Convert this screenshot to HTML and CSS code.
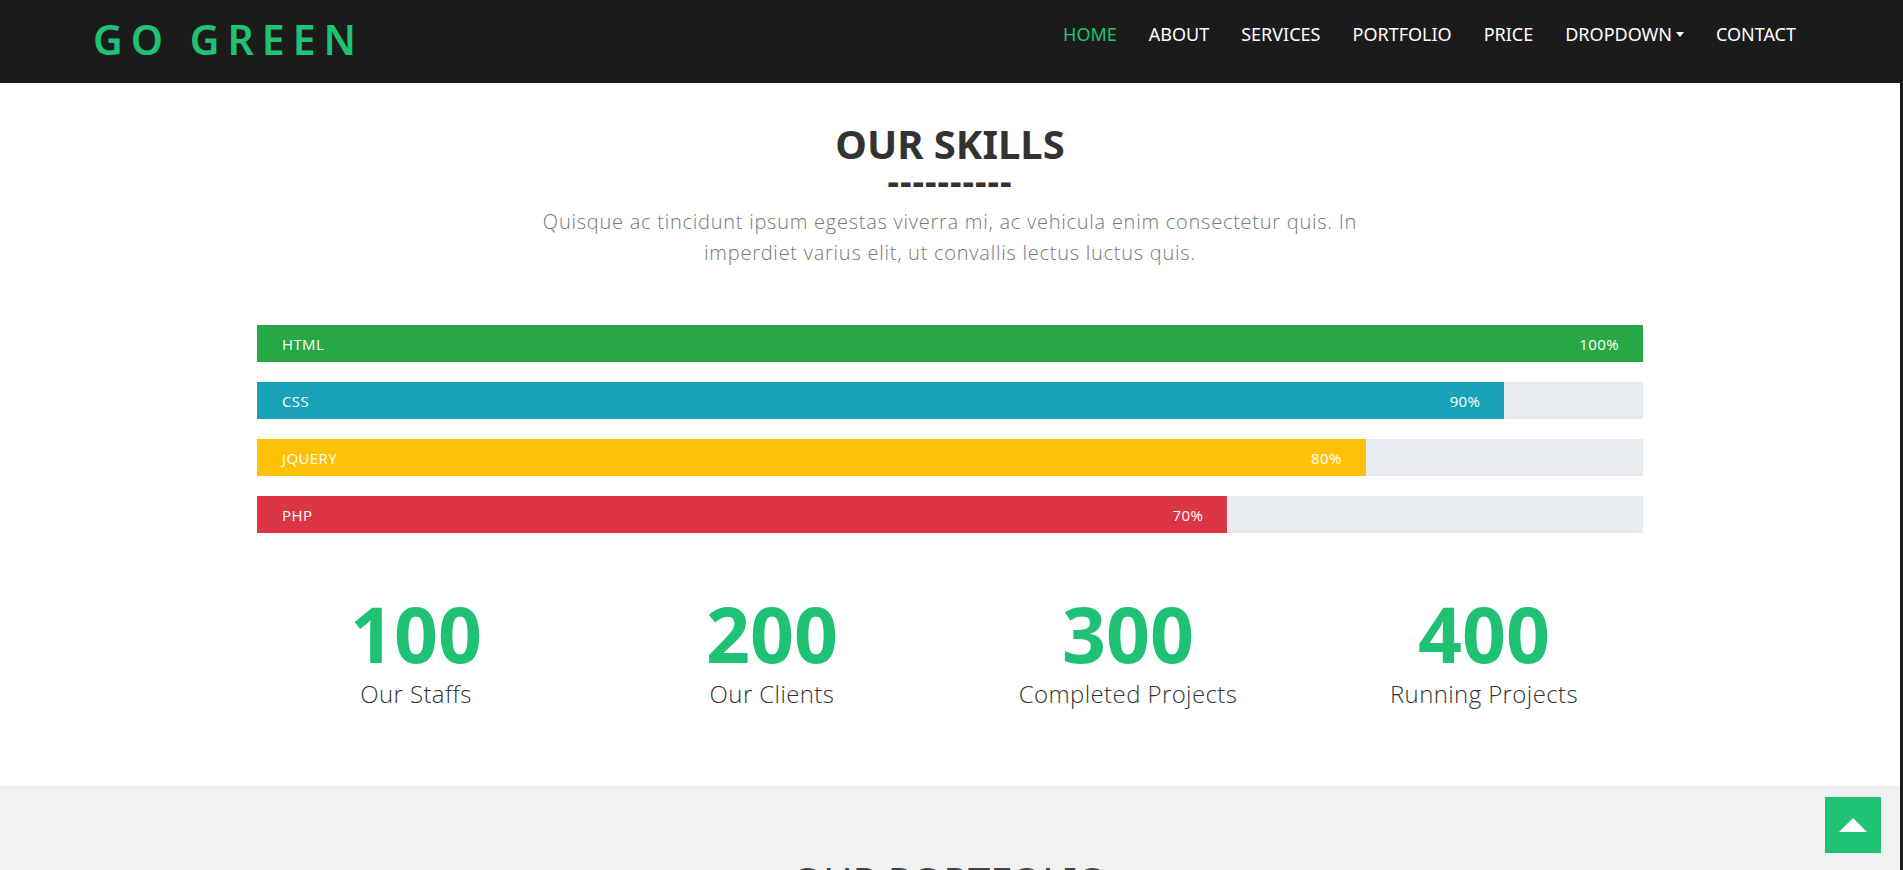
FILE: index.html
```html
<!DOCTYPE html>
<html lang="en">
<head>
<meta charset="utf-8">
<title>Go Green</title>
<link rel="stylesheet" href="styles.css">
</head>
<body>
<header class="navbar">
  <a class="brand" href="#">GO GREEN</a>
  <nav class="nav">
    <a class="nav-link active" href="#">HOME</a>
    <a class="nav-link" href="#">ABOUT</a>
    <a class="nav-link" href="#">SERVICES</a>
    <a class="nav-link" href="#">PORTFOLIO</a>
    <a class="nav-link" href="#">PRICE</a>
    <a class="nav-link dropdown" href="#">DROPDOWN<span class="caret"></span></a>
    <a class="nav-link" href="#">CONTACT</a>
  </nav>
</header>

<section class="skills">
  <h2 class="section-title">OUR SKILLS</h2>
  <div class="dashes">----------</div>
  <p class="lead">Quisque ac tincidunt ipsum egestas viverra mi, ac vehicula enim consectetur quis. In imperdiet varius elit, ut convallis lectus luctus quis.</p>

  <div class="bars">
    <div class="progress"><div class="bar bar-green" style="width:100%"><span>HTML</span><span>100%</span></div></div>
    <div class="progress"><div class="bar bar-teal" style="width:90%"><span>CSS</span><span>90%</span></div></div>
    <div class="progress"><div class="bar bar-yellow" style="width:80%"><span>JQUERY</span><span>80%</span></div></div>
    <div class="progress"><div class="bar bar-red" style="width:70%"><span>PHP</span><span>70%</span></div></div>
  </div>

  <div class="counters">
    <div class="counter"><div class="num">100</div><div class="label">Our Staffs</div></div>
    <div class="counter"><div class="num">200</div><div class="label">Our Clients</div></div>
    <div class="counter"><div class="num">300</div><div class="label">Completed Projects</div></div>
    <div class="counter"><div class="num">400</div><div class="label">Running Projects</div></div>
  </div>
</section>

<section class="portfolio">
  <h2 class="section-title">OUR PORTFOLIO</h2>
</section>

<a class="to-top" href="#"><span class="up"></span></a>
</body>
</html>
```
FILE: styles.css
```css
* { box-sizing: border-box; }
html { background: #1b1b1b; }
body {
  margin: 0;
  margin-right: 3px;
  background: #fff;
  font-family: "Open Sans", "Noto Sans", sans-serif;
  overflow: hidden;
  height: 870px;
}
a { text-decoration: none; }

.navbar {
  height: 83px;
  background: #1b1b1b;
  display: flex;
  align-items: center;
  justify-content: space-between;
  padding: 0 88px 0 93px;
}
.brand {
  font-family: "Noto Sans", "Open Sans", sans-serif;
  font-size: 41px;
  font-weight: 600;
  letter-spacing: 8px;
  color: #1fc174;
  line-height: 1;
  margin-bottom: 5px;
}
.nav { display: flex; align-items: center; margin-bottom: 15px; }
.nav-link {
  font-family: "Noto Sans", sans-serif;
  font-size: 18px;
  color: #fff;
  padding: 0 16px;
  display: flex;
  align-items: center;
}
.nav-link.active { color: #1fc174; }
.caret {
  display: inline-block;
  margin-left: 4px;
  border-left: 4px solid transparent;
  border-right: 4px solid transparent;
  border-top: 5px solid #fff;
}

.skills {
  padding-top: 37px;
  padding-bottom: 77px;
  display: flex;
  flex-direction: column;
  align-items: center;
}
.section-title {
  margin: 0;
  font-family: "Noto Sans", sans-serif;
  font-size: 40px;
  font-weight: 700;
  color: #333;
  line-height: 48px;
}
.dashes {
  font-family: "Noto Sans", sans-serif;
  font-weight: 700;
  font-size: 36px;
  letter-spacing: 1px;
  color: #333;
  line-height: 26px;
  height: 26px;
  margin-top: 0;
}
.lead {
  margin: 12px 0 0;
  width: 860px;
  text-align: center;
  font-family: "Open Sans", sans-serif;
  font-weight: 300;
  font-size: 20px;
  letter-spacing: 0.75px;
  line-height: 31px;
  color: #777;
}
.bars {
  width: 1386px;
  margin-top: 57px;
  display: flex;
  flex-direction: column;
  gap: 20px;
}
.progress {
  height: 37px;
  background: #e9ecef;
  display: flex;
}
.bar {
  height: 100%;
  display: flex;
  align-items: center;
  justify-content: space-between;
  padding: 0 24px 0 25px;
  color: #fff;
  font-family: "Open Sans", sans-serif;
  font-size: 15px;
  letter-spacing: 0.4px;
  font-weight: 400;
}
.bar-green { background: #28a745; }
.bar-teal { background: #17a2b8; }
.bar-yellow { background: #ffc107; }
.bar-red { background: #dc3545; }

.counters {
  width: 1424px;
  margin-top: 61px;
  display: grid;
  grid-template-columns: repeat(4, 1fr);
}
.counter { text-align: center; }
.num {
  font-family: "Noto Sans", sans-serif;
  font-weight: 700;
  font-size: 77px;
  line-height: 80px;
  color: #1fc174;
}
.label {
  margin-top: 5px;
  font-family: "Open Sans", sans-serif;
  font-weight: 300;
  font-size: 24px;
  letter-spacing: 0.4px;
  line-height: 30px;
  color: #333;
}

.portfolio {
  background: #f1f1f1;
  padding-top: 72px;
  display: flex;
  justify-content: center;
  height: 200px;
}
.portfolio .section-title { font-weight: 400; color: #444; }

.to-top {
  position: fixed;
  right: 22px;
  bottom: 17px;
  width: 56px;
  height: 56px;
  background: #1fc174;
  display: flex;
  align-items: center;
  justify-content: center;
}
.up {
  width: 0;
  height: 0;
  border-left: 14px solid transparent;
  border-right: 14px solid transparent;
  border-bottom: 14px solid #fff;
}
```
